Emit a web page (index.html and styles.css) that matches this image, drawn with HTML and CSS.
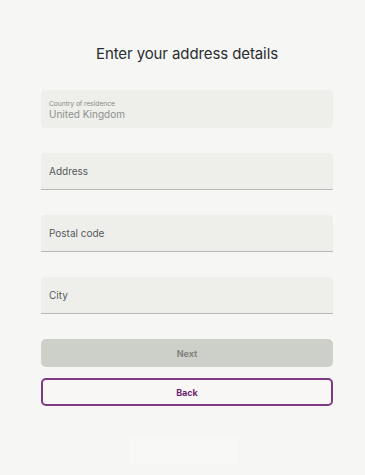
FILE: index.html
```html
<!DOCTYPE html>
<html lang="en">
<head>
<meta charset="utf-8">
<title>Enter your address details</title>
<link rel="stylesheet" href="styles.css">
</head>
<body>
<main class="page">
  <h1 class="title">Enter your address details</h1>
  <form class="form">
    <div class="field field-filled">
      <span class="field-label">Country of residence</span>
      <span class="field-value">United Kingdom</span>
    </div>
    <div class="field field-input"><span class="placeholder">Address</span></div>
    <div class="field field-input"><span class="placeholder">Postal code</span></div>
    <div class="field field-input"><span class="placeholder">City</span></div>
    <div class="actions">
      <button type="button" class="btn btn-next">Next</button>
      <button type="button" class="btn btn-back">Back</button>
    </div>
  </form>
  <div class="ghost"></div>
</main>
</body>
</html>
```
FILE: styles.css
```css
html, body {
  margin: 0;
  padding: 0;
  background: #f6f6f4;
}
body {
  font-family: Inter, "Liberation Sans", Arial, sans-serif;
  color: #2b2f31;
}
.page {
  width: 292px;
  margin-left: 41px;
  padding-top: 45px;
  display: flex;
  flex-direction: column;
}
.title {
  margin: 0;
  font-size: 15px;
  line-height: 18px;
  font-weight: 400;
  text-align: center;
  color: #2a2e30;
  letter-spacing: -0.1px;
}
.form {
  margin-top: 27px;
  display: flex;
  flex-direction: column;
  gap: 25px;
}
.field {
  background: #eeeeeb;
  border-radius: 4px 4px 0 0;
  box-sizing: border-box;
  padding-left: 8px;
  display: flex;
  flex-direction: column;
  justify-content: center;
}
.field-filled {
  height: 38px;
  border-radius: 4px;
  padding-top: 1px;
}
.field-label {
  font-size: 6.8px;
  line-height: 9px;
  color: #8a8c89;
  letter-spacing: -0.1px;
}
.field-value {
  font-size: 10px;
  line-height: 13px;
  color: #8d908d;
}
.field-input {
  height: 37px;
  border-bottom: 1.5px solid #b8b9b5;
}
.placeholder {
  font-size: 10px;
  line-height: 13px;
  color: #55595a;
}
.actions {
  display: flex;
  flex-direction: column;
  gap: 11px;
}
.btn {
  height: 28px;
  border-radius: 5px;
  font-family: Inter, "Liberation Sans", Arial, sans-serif;
  font-size: 9px;
  font-weight: 700;
  padding: 0;
  width: 100%;
  box-sizing: border-box;
}
.btn-next {
  background: #cdd0c8;
  border: none;
  color: #80837d;
}
.btn-back {
  background: #f8f7f6;
  border: 2px solid #7e3a84;
  color: #6e1f74;
}
.ghost {
  margin-top: 32px;
  margin-left: 88px;
  width: 108px;
  height: 27px;
  background: #f8f8f7;
}
```
